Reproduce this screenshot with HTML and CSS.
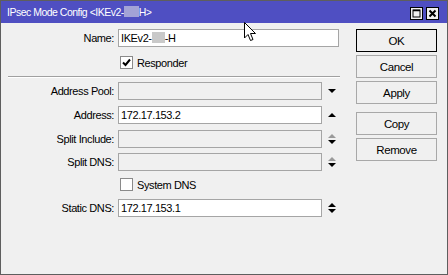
FILE: index.html
```html
<!DOCTYPE html>
<html lang="en">
<head>
  <meta charset="UTF-8">
  <title>IPsec Mode Config</title>
  <link rel="stylesheet" href="styles.css">
</head>
<body>
  <div class="window">
    <div class="titlebar">
      <span class="title">IPsec Mode Config &lt;IKEv2-<span class="redact-title"></span>H&gt;</span>
      <div class="title-buttons">
        <svg class="tb-btn" width="13" height="13" viewBox="0 0 13 13">
          <rect x="0.5" y="0.5" width="12" height="12" fill="#f0f0f0" stroke="#000"/>
          <rect x="3" y="3" width="7" height="7" fill="none" stroke="#000"/>
          <line x1="3" y1="3.5" x2="10" y2="3.5" stroke="#000" stroke-width="1.5"/>
        </svg>
        <svg class="tb-btn" width="13" height="13" viewBox="0 0 13 13">
          <rect x="0.5" y="0.5" width="12" height="12" fill="#f0f0f0" stroke="#000"/>
          <path d="M3.5 3.5 L9.5 9.5 M9.5 3.5 L3.5 9.5" stroke="#000" stroke-width="2"/>
        </svg>
      </div>
    </div>

    <div class="content">
      <div class="form">
        <div class="row">
          <label class="label">Name:</label>
          <div class="field field-wide">IKEv2-<span class="redact-field"></span>-H</div>
        </div>

        <div class="check-row row-responder">
          <span class="checkbox checked">
            <svg width="9" height="9" viewBox="0 0 9 9"><path d="M1 4.5 L3.5 7 L8 1.5" fill="none" stroke="#000" stroke-width="2"/></svg>
          </span>
          <span>Responder</span>
        </div>

        <div class="separator"></div>

        <div class="row row-pool">
          <label class="label">Address Pool:</label>
          <div class="field disabled"></div>
          <div class="arrows"><span class="tri-down"></span></div>
        </div>

        <div class="row row-gap6">
          <label class="label">Address:</label>
          <div class="field">172.17.153.2</div>
          <div class="arrows"><span class="tri-up"></span></div>
        </div>

        <div class="row row-gap6">
          <label class="label">Split Include:</label>
          <div class="field disabled"></div>
          <div class="arrows"><span class="tri-up muted"></span><span class="tri-down"></span></div>
        </div>

        <div class="row row-gap5">
          <label class="label">Split DNS:</label>
          <div class="field disabled"></div>
          <div class="arrows"><span class="tri-up muted"></span><span class="tri-down"></span></div>
        </div>

        <div class="check-row row-sysdns">
          <span class="checkbox"></span>
          <span>System DNS</span>
        </div>

        <div class="row row-static">
          <label class="label">Static DNS:</label>
          <div class="field">172.17.153.1</div>
          <div class="arrows"><span class="tri-up"></span><span class="tri-down"></span></div>
        </div>
      </div>

      <div class="buttons">
        <button class="btn btn-default">OK</button>
        <button class="btn">Cancel</button>
        <button class="btn">Apply</button>
        <button class="btn btn-group">Copy</button>
        <button class="btn">Remove</button>
      </div>
    </div>

    <svg class="cursor" width="13" height="20" viewBox="0 0 13 20">
      <path d="M0.5 0.5 L0.5 16 L4 12.5 L6.5 18.5 L9 17.5 L6.5 11.5 L11.5 11.5 Z" fill="#fff" stroke="#000" stroke-linejoin="round"/>
    </svg>
  </div>
</body>
</html>
```

FILE: styles.css
```css
/* Base */
* {
  margin: 0;
  padding: 0;
  box-sizing: border-box;
}

body {
  font-family: 'Liberation Sans', Arial, sans-serif;
  font-size: 11px;
  letter-spacing: -0.4px;
  color: #000;
  background: #f0f0f0;
}

/* Window frame */
.window {
  position: relative;
  width: 448px;
  height: 275px;
  border: 1px solid #5e5e5e;
  background: #f0f0f0;
}

.titlebar {
  height: 22px;
  background: #4f4fc2;
  color: #fff;
  display: flex;
  align-items: center;
  justify-content: space-between;
  padding: 0 8px 0 6px;
}

.title {
  font-size: 10.5px;
  letter-spacing: -0.5px;
  white-space: nowrap;
}

.redact-title {
  display: inline-block;
  width: 15px;
  height: 11px;
  vertical-align: -1px;
  background: #a3a3d6;
}

.title-buttons {
  display: flex;
  gap: 3px;
  margin-top: 2px;
}

.tb-btn {
  display: block;
}

/* Content area */
.content {
  display: flex;
  padding-top: 6px;
}

.form {
  width: 339px;
  display: flex;
  flex-direction: column;
}

.row {
  display: flex;
  align-items: center;
  height: 18px;
}

.label {
  width: 113px;
  margin-right: 4px;
  text-align: right;
  white-space: nowrap;
}

.field {
  width: 204px;
  height: 18px;
  border: 1px solid #a5a5a5;
  background: #fff;
  padding-left: 2px;
  line-height: 16px;
  white-space: nowrap;
}

.field-wide {
  width: 221px;
}

.field.disabled {
  background: #f0f0f0;
}

.redact-field {
  display: inline-block;
  width: 13px;
  height: 11px;
  vertical-align: -1px;
  background: #c9c9c9;
}

.arrows {
  width: 18px;
  display: flex;
  flex-direction: column;
  align-items: center;
  gap: 2px;
  padding-left: 2px;
}

.tri-down,
.tri-up {
  width: 0;
  height: 0;
  border-left: 4px solid transparent;
  border-right: 4px solid transparent;
}

.tri-down {
  border-top: 4px solid #000;
}

.tri-up {
  border-bottom: 4px solid #000;
}

.tri-up.muted {
  border-bottom-color: #9a9a9a;
}

/* Checkbox rows */
.check-row {
  display: flex;
  align-items: center;
  gap: 4px;
  height: 13px;
  padding-left: 119px;
}

.checkbox {
  width: 13px;
  height: 13px;
  border: 1px solid #8a8a8a;
  background: #fff;
  display: flex;
  align-items: center;
  justify-content: center;
}

.checkbox svg {
  display: block;
}

.row-responder {
  margin-top: 9px;
}

.separator {
  margin: 7px 0 0 7px;
  width: 332px;
  border-top: 1px solid #a0a0a0;
  border-bottom: 1px solid #fff;
}

.row-pool {
  margin-top: 4px;
}

.row-gap6 {
  margin-top: 6px;
}

.row-gap5 {
  margin-top: 5px;
}

.row-sysdns {
  margin-top: 7px;
}

.row-static {
  margin-top: 8px;
}

/* Button column */
.buttons {
  margin-left: 16px;
  width: 81px;
  display: flex;
  flex-direction: column;
  gap: 3px;
}

.btn {
  height: 23px;
  border: 1px solid #a8a8a8;
  background: #f0f0f0;
  font-family: inherit;
  font-size: 11.5px;
  letter-spacing: -0.4px;
  color: #000;
}

.btn-default {
  border-color: #000;
}

.btn-group {
  margin-top: 5px;
}

/* Mouse pointer over the window */
.cursor {
  position: absolute;
  left: 243px;
  top: 21px;
}
```
